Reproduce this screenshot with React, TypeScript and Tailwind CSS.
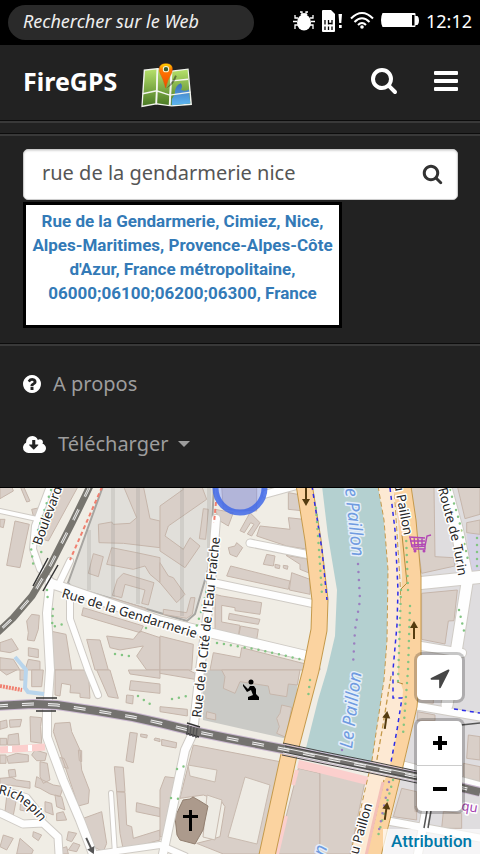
import React from "react";

const FA = {
  search:
    "M1216 832q0-185-131.5-316.5t-316.5-131.5-316.5 131.5-131.5 316.5 131.5 316.5 316.5 131.5 316.5-131.5 131.5-316.5zm512 832q0 52-38 90t-90 38q-54 0-90-38l-343-342q-179 124-399 124-143 0-273.5-55.5t-225-150-150-225-55.5-273.5 55.5-273.5 150-225 225-150 273.5-55.5 273.5 55.5 225 150 150 225 55.5 273.5q0 220-124 399l343 343q37 37 37 90z",
  question:
    "M1024 1376v-192q0-14-9-23t-23-9h-192q-14 0-23 9t-9 23v192q0 14 9 23t23 9h192q14 0 23-9t9-23zM1280 704q0-88-55.5-163t-138.5-116-170-41q-243 0-371 213-15 24 8 42l132 100q7 6 19 6 16 0 25-12 53-68 86-92 34-24 86-24 48 0 85.5 26t37.5 59q0 38-20 61t-68 45q-63 28-115.5 86.5t-52.5 125.5v36q0 14 9 23t23 9h192q14 0 23-9t9-23q0-19 21.5-49.5t54.5-49.5q32-18 49-28.5t46-35 44.5-48 28-60.5 12.5-81zM1664 896q0 209-103 385.5t-279.5 279.5-385.5 103-385.5-103-279.5-279.5-103-385.5 103-385.5 279.5-279.5 385.5-103 385.5 103 279.5 279.5 103 385.5z",
  cloud:
    "M1344 864q0-14-9-23t-23-9h-224v-352q0-13-9.5-22.5t-22.5-9.5h-192q-13 0-22.5 9.5t-9.5 22.5v352h-224q-13 0-22.5 9.5t-9.5 22.5q0 14 9 23l352 352q9 9 23 9t23-9l351-351q10-12 10-24zm640 288q0 159-112.5 271.5t-271.5 112.5h-1088q-185 0-316.5-131.5t-131.5-316.5q0-130 70-240t188-165q-2-30-2-43 0-212 150-362t362-150q156 0 285.5 87t188.5 231q71-62 166-62 106 0 181 75t75 181q0 76-41 138 130 31 213.5 135.5t83.5 238.5z",
  arrow:
    "M1593 349l-640 1280q-17 35-57 35-5 0-15-2-22-5-35.5-22.5t-13.5-39.5v-576h-576q-22 0-39.5-13.5t-22.5-35.5 4-42 29-30l1280-640q13-7 29-7 27 0 45 19 15 14 18.5 34.5t-6.5 39.5z",
};

function BugIcon() {
  return (
    <svg className="h-5 w-[22px]" viewBox="0 0 22 20" aria-hidden="true">
      <g stroke="#fff" strokeWidth="1.3" fill="none">
        <path d="M7 1h2v3M15 1h-2v3M5 7H2V4M17 7h3V4M4 10.500H0M18 10.500h4M5 14H2v4M17 14h3v4" />
      </g>
      <ellipse cx="11" cy="11.500" rx="7" ry="8" fill="#fff" />
      <path d="M7 4q4-4 8 0z" fill="#fff" />
    </svg>
  );
}

function SimIcon() {
  return (
    <svg className="h-[22px] w-[21px]" viewBox="0 0 21 22" aria-hidden="true">
      <path d="M1 0h8l4 4v17q0 1-1 1H1q-1 0-1-1V1q0-1 1-1z" fill="#fff" />
      <path d="M3 10v4.500M6.500 10v4.500M10 10v4.500M3 16.500v3.500M6.500 16.500v3.500M10 16.500v3.500M6.500 13.500H10" stroke="#000" strokeWidth="1.300" />
      <path d="M16.500 4h3.500l-.7 9h-2.100zM17 15h2.700v3H17z" fill="#fff" />
    </svg>
  );
}

function WifiIcon() {
  return (
    <svg className="h-[17px] w-6" viewBox="0 0 24 17" aria-hidden="true">
      <g fill="none" stroke="#fff" strokeWidth="2">
        <path d="M1 6.500Q12-4.500 23 6.500" />
        <path d="M4.500 10Q12 2.500 19.500 10" />
        <path d="M8 13Q12 9 16 13" />
      </g>
      <circle cx="12" cy="15" r="1.800" fill="#fff" />
    </svg>
  );
}

function BatteryIcon() {
  return (
    <svg className="h-[15px] w-[38px]" viewBox="0 0 38 15" aria-hidden="true">
      <path d="M1.500 0h32q1 0 1 1v2h2q1.500 1 1.500 4.500T36.500 12h-2v1q0 1-1 1h-32Q0 11 0 7t1.500-7z" fill="#fff" />
      <path d="M31 2h2.500v10.500H31z" fill="#000" />
    </svg>
  );
}

function MapLogo() {
  return (
    <svg className="mt-2 h-[46px] w-[52px]" viewBox="428 188 154 136" aria-hidden="true">
      <defs>
        <linearGradient id="leaf" x1="0" y1="0" x2="0" y2="1">
          <stop offset="0" stopColor="#b5e06a" />
          <stop offset="1" stopColor="#4b7a25" />
        </linearGradient>
        <linearGradient id="sea" x1="0" y1="0" x2="0" y2="1">
          <stop offset="0" stopColor="#3c6cb4" />
          <stop offset="1" stopColor="#5db7f2" />
        </linearGradient>
        <linearGradient id="pin" x1="0" y1="0" x2="0" y2="1">
          <stop offset="0" stopColor="#ffe000" />
          <stop offset=".25" stopColor="#ff7a00" />
          <stop offset="1" stopColor="#f04a00" />
        </linearGradient>
      </defs>
      <path d="M436 210L477 206L518 213L569 207L579 315L519 320L473 314L429 322Z" fill="#f2f4ee" />
      <path d="M440 214L474 210L471 310L433 317Z" fill="url(#leaf)" />
      <path d="M479 210L516 217L511 315L476 310Z" fill="url(#leaf)" />
      <path d="M521 217L566 211L574 311L516 316Z" fill="url(#leaf)" />
      <path d="M519 316V298L528 284Q527 258 546 251Q553 260 546 270Q558 276 570 269L574 311Z" fill="url(#sea)" />
      <path d="M433 282L474 273L513 286L575 277M520 244L567 239M477 206L473 314M518 213L512 318" stroke="#f4f5f0" strokeWidth="4" fill="none" />
      <path d="M502 266Q520 250 529 227L534 229Q526 256 502 266Z" fill="#000" opacity=".4" />
      <path d="M501 265Q493 236 485 223Q474 193 502 192Q529 193 518 223Q508 238 501 265Z" fill="url(#pin)" stroke="#db4800" strokeWidth="1" />
      <circle cx="502" cy="209" r="8" fill="#365a2d" stroke="#f7f7d8" strokeWidth="3" />
    </svg>
  );
}

const tiles = [
  {
    at: "translate(0 486) scale(.33333)",
    d: "M0 0L35 0L40 15L0 38ZM45 105L88 115L60 245L20 238ZM190 0L235 0L145 165L130 160L165 75ZM70 0L90 45L80 48L60 0ZM370 0L410 95L390 112L340 115L335 108L295 115L297 170L370 172L480 185L480 105L450 98L430 0ZM335 185L410 200L480 215L480 290L450 265L435 240L400 250L320 235ZM280 203L310 212L295 272L265 262ZM370 262L462 290L445 357L425 352L435 312L375 295L365 335L337 328L352 280ZM335 335L440 368L435 378L335 350ZM250 365L430 420L420 440L245 388ZM95 385L118 388L115 430L103 465L82 462L85 440L80 405ZM150 435L198 445L215 552L155 552ZM260 460L300 462L325 552L285 552ZM320 450L400 460L420 435L480 455L480 552L440 552L410 510L430 480L360 492L330 485ZM0 470L35 458L55 490L30 500L0 495ZM85 485L115 490L115 515L85 510ZM0 515L40 520L60 552H0ZM85 520L120 526V552H75ZM0 100L15 100L10 125L0 122ZM95 70L120 65L125 85L100 90Z",
  },
  {
    at: "translate(160 486) scale(.33333)",
    d: "M0 60L70 10L65 0H125L140 40L25 120L15 150L70 190L90 155L120 180L75 245L0 195ZM130 68L145 70L137 160L118 158ZM0 230L25 270L40 275L75 325L50 350L0 290ZM10 370L80 380L92 335L105 335L97 385L80 397L10 385ZM270 80L300 110L275 150L262 144L282 115L272 110L253 140L240 134ZM300 120L390 130L385 95L430 100L445 190L380 180L290 150ZM385 20L430 28L435 75L385 70ZM205 185L225 180L230 170L248 185L230 213L210 205ZM320 205L345 210L340 240L310 235ZM212 240L390 285L385 310L200 270ZM395 260L450 280L450 325L388 312ZM185 330L305 350L300 385L225 374V365L185 358V408L240 418L235 450L165 438V325ZM208 382L300 400L295 415L205 400ZM242 420L295 430L290 462L236 450ZM165 70L220 80L205 120L180 105ZM0 450L100 475L95 552H0ZM245 485L480 545L480 552L150 552L160 500L240 515ZM378 208L450 220V262L420 250V235ZM185 0H290V75L190 70ZM345 235L360 238L358 248L345 245ZM370 238L384 240L382 250L370 246Z",
  },
  {
    at: "translate(320 486) scale(.33333)",
    d: "M270 0L342 0L345 212L400 215L405 240L305 262ZM305 322L412 312L402 404L385 405L375 474L305 460ZM412 0L480 0V85L435 98ZM440 110L480 102V145L440 140Z",
  },
  {
    at: "translate(0 670) scale(.33333)",
    d: "M165 0H265L270 85L240 82V70L210 68L212 45L185 40L180 78L165 75ZM290 0H330L355 85L325 80ZM385 0H480V25L390 12ZM392 32L480 42V70L388 60ZM380 75L400 77L398 102L378 98ZM165 160L210 157L215 185L240 240L245 300L268 360L265 400L235 408L160 185ZM90 140L125 143L122 170L125 220L92 215ZM0 155L20 150L22 172L0 178ZM28 150L65 148L60 170L30 172ZM25 195L55 190L58 225L22 225ZM0 205L20 205V225H0ZM20 260L50 250L85 255V275L25 280ZM0 255H18V280H0ZM390 187L412 190L400 278L378 272ZM343 290L370 292L375 365L350 365ZM350 365L375 367L380 465L395 470L400 505L480 480V510L370 540L360 490ZM410 398L480 415V440L408 425ZM250 445L305 425L320 520L310 545L280 530ZM95 255L105 240L140 250L135 272H110ZM120 275L142 280L150 330L130 340L120 320ZM110 320L128 330L160 345L190 350L180 380L150 372L120 355L105 350ZM165 375L185 380L195 420L170 410ZM135 395L155 400L160 435L135 425ZM170 430L190 425L200 450L170 452ZM10 495L40 505L20 540L0 530ZM60 505L100 540L95 552H50ZM100 485L125 495L115 512L98 500ZM205 485L230 490L215 515L200 510ZM220 518L240 525L230 545L205 540ZM175 538L200 530L205 552H175ZM25 300L45 298L48 320L28 322ZM20 380L50 385L40 435L15 425ZM62 395L90 400L85 425L60 420ZM0 325L35 322L50 330L90 335V355L60 350L0 342ZM60 0H75V30H60ZM95 0H130L125 50H95ZM0 0H50L20 15ZM422 192L442 195L440 204L422 200ZM465 204L480 207V215L462 210ZM175 262L192 265L205 295L185 290ZM235 240L245 242V275L238 272Z",
  },
  {
    at: "translate(160 670) scale(.33333)",
    d: "M185 0H420L412 45L385 42L380 80L330 72L325 48L240 35L225 70L190 55L195 20ZM365 105L395 112L378 202L350 190L358 170L350 145L360 130ZM100 225L375 278L300 552H190L110 520L150 510L180 500L195 410L185 395L130 375L95 380L60 385ZM15 320L55 325L40 400L20 500H0V360ZM0 10L105 28V10L85 0H0ZM0 110L82 118V138L0 125ZM140 125L167 132V150L138 144ZM5 208L50 218L48 234L5 226ZM415 295L480 310V552H350Z",
  },
  {
    at: "translate(320 670) scale(.33333)",
    d: "M0 305L135 335L90 552H0ZM292 60H340V100H295ZM292 125L345 135V152H292ZM445 195L480 200V270L440 265ZM245 355L290 365V450L220 440ZM285 410H292V425H285ZM430 280L480 290V335L430 325ZM370 425L425 430V475H365Z",
  },
];

const roads: [string, number][] = [
  ["M0 511L37 519", 5],
  ["M50 486L35 526L33 549L40 569L55 586", 7],
  ["M70 561L58 586", 7],
  ["M50 586L47 613L50 670L47 713L47 737L63 780L80 820L93 854", 9],
  ["M70 595L70 619L88 670L98 695", 7],
  ["M50 583L160 621L308 656", 10],
  ["M215 583L315 604", 8],
  ["M250 543L310 555", 8],
  ["M266 494L295 486", 8],
  ["M216 519L210 596L200 670L193 733L185 750L163 854", 9],
  ["M421 583L480 577", 13],
  ["M467 583L457 646L447 705", 12],
  ["M421 646L462 653", 9],
  ["M445 486L457 530L466 574", 13],
  ["M417 706L480 717", 8],
  ["M388 821L480 838", 8],
  ["M428 800L418 854", 9],
  ["M0 813L23 824L43 823L58 837L59 854", 8],
  ["M-4 787L27 797L43 817", 6],
  ["M111 793L115 854", 5],
  ["M97 854L160 845L185 856", 7],
  ["M405 765L480 785", 7],
];

const railA = "M90 486L72 523L50 566L32 596L13 618L-4 634";
const railB =
  "M-4 706L33 704L57 705L97 711L133 717L160 723L193 731L227 738L283 749L320 757L370 767L417 777L480 792";

function UpArrow({ at }: { at: string }) {
  return (
    <path transform={at} d="M-1 9V-2H-4L0-9L4-2H1V9Z" fill="#553c10" />
  );
}

function StreetMap() {
  return (
    <svg
      className="absolute inset-0 h-full w-full"
      viewBox="0 488 480 366"
      preserveAspectRatio="xMidYMin slice"
      role="img"
      aria-label="Carte de Nice"
    >
      <path d="M0 480H480V860H0Z" fill="#f0ede5" />
      <path d="M410 480H480V860H382L421 690V577Z" fill="#dfdddf" />
      <path d="M467 534H480V576H470Z" fill="#d5d2e5" />
      <path d="M103 486L68 583L72 587L160 613L187 621L195 614L210 563L214 486Z" fill="#e1dfda" stroke="#a7a5a1" strokeWidth="2" />
      <path d="M203 670H299L292 740L203 720Z" fill="#cacac6" />
      {tiles.map((t) => (
        <path key={t.at} transform={t.at} d={t.d} fill="#d9cfc8" stroke="#c6b6ab" strokeWidth="3" />
      ))}
      <path d="M89 530V590M113 486V597M138 486V604M182 486V616M209 486V560" stroke="#8c8c88" strokeOpacity=".2" strokeWidth="4" />
      <g fill="#eeebe4" stroke="#c9bbb0" strokeWidth="1">
        <path d="M245 777L270 785L257 844L228 837Z" />
        <path d="M188 765L217 770L215 782L190 776Z" />
        <path d="M207 795L222 800L215 840L203 837Z" />
      </g>
      <path d="M183 800L190 799L193 797L200 801L208 806L203 830L195 844L180 840L177 835L175 817Z" fill="#ac9a8c" stroke="#927f70" />

      <path d="M322 486L328 536L337 590L335 636L327 670L318 700L305 752L372 766L384 680L387 640L388 570L384 520L378 486Z" fill="#b4d0d0" />

      <g fill="none" strokeLinecap="round" strokeLinejoin="round">
        {roads.map(([d, w]) => (
          <path key={d} d={d} stroke="#cfcbc5" strokeWidth={w + 1} />
        ))}
        {roads.map(([d, w]) => (
          <path key={d} d={d} stroke="#fefefe" strokeWidth={w - 1} />
        ))}
      </g>
      <path d="M0 750L45 747" stroke="#fbcfcd" strokeWidth="7" />
      <path d="M8 749h4M28 748h4" stroke="#fff" strokeWidth="6" />
      <path d="M298 764L320 769L368 781" stroke="#fbcfcd" strokeWidth="8" fill="none" />
      <path d="M297 770L293 785M286 816L277 854" stroke="#fbcfcd" strokeWidth="4" />
      <path d="M102 487L70 560" stroke="#f08070" strokeWidth="2" strokeDasharray="4 3" />
      <path d="M216 502L214 523" stroke="#f08070" strokeWidth="2" strokeDasharray="4 3" />
      <path d="M0 686L22 690" stroke="#f08070" strokeWidth="4" strokeDasharray="2 1" />
      <path d="M15 657L26 670L25 688L28 692L44 694" stroke="#b9d5ec" strokeWidth="4" fill="none" />

      <g fill="none" strokeLinejoin="round">
        <path d="M304 484L313 540L320 600L319 630L311 670L290 750L266 860" stroke="#c59a4c" strokeWidth="17" />
        <path d="M304 484L313 540L320 600L319 630L311 670L290 750L266 860" stroke="#fbd3a0" strokeWidth="15" />
      </g>
      <path d="M378 486L384 520L388 570L387 640L384 680L372 760L365 790L350 856H376L392 760L405 700L400 580L394 486Z" fill="#fde9d3" stroke="#c59a4c" strokeWidth="1" strokeDasharray="5 3" />
      <path d="M393 486L398 520L402 575L399 640L398 675L403 690L402 705L393 755L380 795L366 856H381L400 779L417 707L421 660V577L416 520L411 486Z" fill="#fbd3a0" />
      <path d="M381 856L400 779L417 707L421 660V577L416 520L411 486" fill="none" stroke="#c59a4c" strokeWidth="1" />
      <path d="M402 535L407 583L400 590M403 684L397 682" stroke="#b68b3c" fill="none" />
      <path d="M391 676L383 725L376 765M384 780L366 856" stroke="#c59a4c" strokeWidth="1.300" strokeDasharray="5 3" fill="none" />
      <path d="M383 782L374 820L366 856" stroke="#f4c0b8" strokeWidth="3" fill="none" />
      <path d="M390 488L395 530L398 590L397 625L393 670V698H402L397 730L391 762M312 486L322 550L327 600M454 709L480 713" stroke="#2d2dea" strokeWidth="1.500" strokeDasharray="4 4" fill="none" />
      <g fill="none" stroke="#83c583" strokeWidth="2.500" strokeDasharray="0 7" strokeLinecap="round">
        <path d="M401 590L399 650L398 682M410 606L408 670L403 735M406 534L408 590M51 490L38 530L31 548L34 570M40 545L42 556M53 609L52 627L63 624M115 654L135 657M208 585L201 612L196 628M217 643L260 650L304 660M450 490L459 520L468 560M477 538V570M316 508L319 550L322 595M459 610L465 635M138 696L153 706M393 780L377 840M47 590L48 602M146 628H150M310 680L308 698M177 769L187 765M171 798L179 799M172 699L187 696" />
      </g>
      <path d="M358 564L360 600L355 630L353 665M342 750V757M389 782L378 835" stroke="#9b7fc0" strokeWidth="2.500" strokeDasharray="0 8" strokeLinecap="round" fill="none" />

      <g fill="none">
        <path d={railA} stroke="#77756f" strokeWidth="7" />
        <path d={railA} stroke="#eee" strokeWidth="2.500" strokeDasharray="12 14" />
        <path d={railA} stroke="#77756f" strokeWidth=".7" />
        <path d={railB} stroke="#c9b7cf" strokeWidth="10" />
        <path d={railB} stroke="#74726f" strokeWidth="8" />
        <path d={railB} stroke="#f0f0f0" strokeWidth="3" strokeDasharray="12 14" />
        <path d={railB} stroke="#74726f" strokeWidth=".8" />
        <path d="M283 743L320 751L370 761L417 771M282 755L320 763L370 773L417 783M285 746L417 773M283 752L417 779" stroke="#464646" strokeWidth="1" />
        <path d="M284 748L417 775M283 753L417 781" stroke="#e8e8e8" strokeWidth="1" />
        <path d="M48 558L33 586M58 565L43 591M36 698H57M36 711H56M187 723L200 727M186 733L199 737" stroke="#333" strokeWidth="1.500" />
        <path d="M188 725L187 735M191 726L190 736M194 727L193 737M197 728L196 738M427 811L424 828M431 811L428 828M461 725L480 723" stroke="#555" strokeWidth="1.500" />
      </g>

      <circle cx="240" cy="488" r="24.500" fill="#6080ff" fillOpacity=".32" stroke="#4169e8" strokeWidth="6" strokeOpacity=".85" />
      <UpArrow at="translate(414 630)" />
      <UpArrow at="translate(386 720) rotate(8)" />
      <UpArrow at="translate(386 811) rotate(8)" />
      <UpArrow at="translate(306 497) rotate(180)" />
      <path transform="translate(90 846) rotate(155)" d="M-1 9V-2H-4L0-9L4-2H1V9Z" fill="#555" />

      <circle cx="251" cy="682" r="2.500" />
      <path d="M243 684L248 689L250 686L254 686L256 689V694L259 697V700H248V697L253 695L251 690L247 692L243 686Z" />
      <path d="M189 810h3v5h6v3h-6v13h-3v-13h-6v-3h6Z" />
      <path d="M431 535L427 536L425 546L412 547M409 537L425 538M410 541L425 541M411 545L425 544M410 537L412 547M414 537L415 547M418 537V547M422 537V547M425 546L425 549H413" fill="none" stroke="#b247b5" strokeWidth="1.400" />
      <circle cx="415" cy="551" r="1.500" fill="#b247b5" />
      <circle cx="424" cy="551" r="1.500" fill="#b247b5" />

      <defs>
        <path id="turin" d="M438 489L445 515L453 545L460 585" />
        <path id="richepin" d="M-2 794Q26 798 44 828" />
      </defs>
      <g
        className="font-['Noto_Sans','Open_Sans',sans-serif]"
        fill="#262626"
        stroke="#fff"
        strokeWidth="3"
        strokeLinejoin="round"
        paintOrder="stroke"
        fontSize="13"
      >
        <text transform="translate(61 597) rotate(17)">Rue de la Gendarmerie</text>
        <text transform="translate(201 718) rotate(-84)">Rue de la Cité de l'Eau Fraîche</text>
        <text transform="translate(41 546) rotate(-70)">Boulevard</text>
        <text transform="translate(394 484) rotate(79)">u Paillon</text>
        <text transform="translate(358 855) rotate(-74)">u Paillon</text>
        <text><textPath href="#turin">Route de Turin</textPath></text>
        <text><textPath href="#richepin">Richepin</textPath></text>
        <text transform="translate(461 810) rotate(9)" fill="#a443b0">qu</text>
        <g fill="#6f9be0" stroke="#e4eefa" fontStyle="italic" fontSize="18">
          <text transform="translate(344 480) rotate(84)">Le Paillon</text>
          <text transform="translate(352 749) rotate(-83)">Le Paillon</text>
          <text transform="translate(321 871) rotate(-75)">lon</text>
        </g>
      </g>
    </svg>
  );
}

function Divider() {
  return <div className="h-[3px] border-t border-[#0c0c0c] bg-[#393939]" />;
}

export default function App() {
  return (
    <div className="flex min-h-screen flex-col bg-[#222222] font-['Noto_Sans','Open_Sans',sans-serif]">
      <header className="flex h-[45px] items-center bg-black px-2 text-white">
        <input
          type="search"
          aria-label="Rechercher sur le Web"
          placeholder="Rechercher sur le Web"
          className="h-[35px] w-[246px] rounded-full bg-[#2a2a2a] px-[15px] pb-1 text-lg italic placeholder:text-[#eeeeee]"
        />
        <div className="ml-auto flex items-center gap-[7px] pb-1">
          <BugIcon />
          <SimIcon />
          <WifiIcon />
          <BatteryIcon />
          <time className="text-lg leading-6">12:12</time>
        </div>
      </header>

      <nav className="flex flex-col">
        <div className="flex h-[75px] items-center pr-[22px] pb-1 pl-[23px]">
          <a href="#" className="mr-6 text-[25px] leading-8 font-bold text-white">
            FireGPS
          </a>
          <MapLogo />
          <div className="ml-auto flex items-center gap-9">
            <button type="button" aria-label="Rechercher">
              <svg className="size-7 fill-white" viewBox="0 64 1792 1792"><path d={FA.search} /></svg>
            </button>
            <button type="button" aria-label="Menu" className="flex flex-col gap-1">
              <span className="h-1 w-6 rounded-[1px] bg-white" />
              <span className="h-1 w-6 rounded-[1px] bg-white" />
              <span className="h-1 w-6 rounded-[1px] bg-white" />
            </button>
          </div>
        </div>
        <Divider />
        <div className="h-[10px]" />
        <Divider />

        <form className="flex flex-col pt-[13px] pr-[22px] pb-[15px] pl-[23px]">
          <div className="flex h-[51px] items-center rounded-[5px] border border-[#cccccc] bg-white pr-[14px] pl-[18px] shadow-[inset_0_1px_2px_rgba(0,0,0,0.15)]">
            <input
              type="text"
              aria-label="Adresse"
              defaultValue="rue de la gendarmerie nice"
              className="min-w-0 flex-1 bg-transparent pb-1 text-xl text-[#555555] outline-none"
            />
            <button type="submit" aria-label="Lancer la recherche">
              <svg className="size-[21px] fill-[#333333]" viewBox="0 64 1792 1792"><path d={FA.search} /></svg>
            </button>
          </div>
          <a
            href="#"
            className="mt-[2px] h-[126px] w-[319px] border-[3px] border-black bg-white pt-1 text-center font-['Roboto',sans-serif] text-[17px] leading-6 font-bold text-[#337ab7]"
          >
            Rue de la Gendarmerie, Cimiez, Nice, Alpes-Maritimes, Provence-Alpes-Côte d'Azur, France métropolitaine, 06000;06100;06200;06300, France
          </a>
        </form>
        <Divider />
        <ul className="border-b border-black px-[23px] pt-2 pb-[13px] text-xl text-[#9d9d9d]">
          <li>
            <a href="#" className="flex h-[60px] items-center gap-3">
              <svg className="size-[18px] fill-white" viewBox="128 128 1536 1536"><path d={FA.question} /></svg>
              A propos
            </a>
          </li>
          <li>
            <button type="button" className="flex h-[60px] items-center gap-3">
              <svg className="h-[17px] w-[23px] fill-white" viewBox="64 128 1920 1408"><path d={FA.cloud} /></svg>
              <span className="flex items-center gap-[9px]">
                Télécharger
                <span className="border-x-[6px] border-t-[6px] border-x-transparent border-t-[#9d9d9d]" />
              </span>
            </button>
          </li>
        </ul>
      </nav>

      <main className="relative min-h-[366px] flex-1 overflow-hidden">
        <StreetMap />
        <div className="absolute right-[18px] bottom-[43px] flex flex-col gap-[21px] text-black">
          <button
            type="button"
            aria-label="Ma position"
            className="flex size-[45px] items-center justify-center rounded-[5px] bg-white shadow-[0_0_0_3px_rgba(0,0,0,0.22)]"
          >
            <svg className="size-6 fill-[#464646]" viewBox="0 0 1792 1792"><path d={FA.arrow} /></svg>
          </button>
          <div className="flex flex-col rounded-[5px] bg-white shadow-[0_0_0_3px_rgba(0,0,0,0.22)]">
            <button type="button" aria-label="Zoom avant" className="flex size-[45px] items-center justify-center border-b border-[#cccccc]">
              <svg className="size-4" viewBox="0 0 16 16"><path d="M8 1v14M1 8h14" stroke="#000" strokeWidth="4" /></svg>
            </button>
            <button type="button" aria-label="Zoom arrière" className="flex size-[45px] items-center justify-center">
              <svg className="size-4" viewBox="0 0 16 16"><path d="M1 8h14" stroke="#000" strokeWidth="4" /></svg>
            </button>
          </div>
        </div>
        <a
          href="#"
          className="absolute right-0 bottom-0 bg-white/70 px-2 font-['Roboto',sans-serif] text-[17px] leading-[25px] font-medium text-[#0078a8]"
        >
          Attribution
        </a>
      </main>
    </div>
  );
}
